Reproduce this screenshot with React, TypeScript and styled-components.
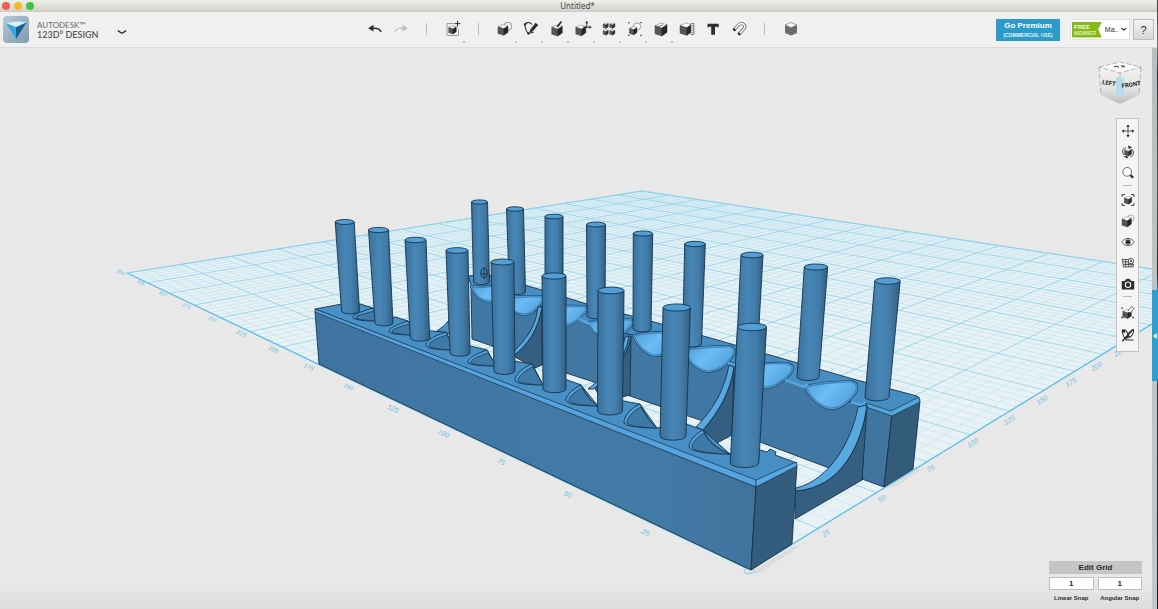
import React from "react";
import styled, { createGlobalStyle } from "styled-components";

const GlobalStyle = createGlobalStyle`
  * { box-sizing: border-box; }
  body { margin: 0; background: #e8e8e8; font-family: "Liberation Sans", Arial, sans-serif; color: #2b2b2b; }
  button, input { font-family: inherit; color: inherit; }
`;

const Desktop = styled.div`
  display: flex;
  min-height: 100vh;
`;
const AppWindow = styled.div`
  flex: 1;
  min-width: 0;
  display: flex;
  flex-direction: column;
`;
const DesktopEdge = styled.div`
  width: 1px;
  background: linear-gradient(#3c3d38, #74766f 8%, #2c2d29 12%, #55574d 30%, #23251f 45%, #2a9fd3 48%, #2a9fd3 62%, #30363c 63%, #15191f);
`;
const TitleBar = styled.header`
  height: 12px;
  display: grid;
  grid-template-columns: 1fr auto 1fr;
  align-items: center;
  padding: 0 2px;
  background: linear-gradient(#efefeb, #d3d2cc);
  border-bottom: 1px solid #cccbc5;
`;
const Lights = styled.div`
  display: flex;
  gap: 4px;
`;
const Light = styled.button<{ $color: string }>`
  width: 8px;
  height: 8px;
  padding: 0;
  border: 0;
  border-radius: 50%;
  background: ${(p) => p.$color};
`;
const WindowTitle = styled.h1`
  margin: 0;
  padding-right: 2px;
  font: 400 8px/10px "Noto Sans", sans-serif;
  color: #4a4a48;
`;
const ToolBar = styled.div`
  height: 36px;
  display: grid;
  grid-template-columns: 1fr auto 1fr;
  align-items: center;
  background: #f0f0f0;
  border-bottom: 1px solid #dcdcdc;
`;
const Brand = styled.div`
  display: flex;
  align-items: center;
  padding-left: 3px;
  gap: 8px;
`;
const BrandText = styled.div`
  display: flex;
  flex-direction: column;
  width: 60px;
  color: #6a6a6a;
  font: 400 8px/10px Lato, sans-serif;
  white-space: nowrap;
`;
const ProductName = styled.strong`
  font-size: 9px;
  font-weight: 600;
  color: #585858;
`;
const PlainButton = styled.button`
  display: flex;
  align-items: center;
  justify-content: center;
  padding: 0;
  border: 0;
  background: none;
`;
const BrandMenu = styled(PlainButton)`
  width: 20px;
  height: 16px;
  margin: 4px 0 0 7px;
`;
const Tools = styled.div`
  display: flex;
  align-self: start;
  margin-left: 9px;
`;
const Tool = styled(PlainButton)<{ $menu?: boolean }>`
  position: relative;
  width: 26px;
  height: 34px;
  &::after {
    content: "";
    display: ${(p) => (p.$menu ? "block" : "none")};
    position: absolute;
    right: 1px;
    bottom: 3px;
    width: 2px;
    height: 2px;
    background: #c8c8c8;
  }
`;
const ToolDivider = styled.span`
  width: 1px;
  height: 12px;
  margin: 11px 13px 11px 12px;
  background: #bdbdbd;
`;
const Account = styled.div`
  display: flex;
  justify-content: flex-end;
  align-items: center;
  padding-right: 3px;
`;
const Premium = styled.button`
  width: 64px;
  height: 22px;
  padding: 0;
  margin-right: 10px;
  border: 0;
  background: #2a9bcb;
  color: #fff;
  font-weight: 700;
  font-size: 8px;
  line-height: 10px;
  small { display: block; font-size: 5px; line-height: 8px; color: #e2f3fa; }
`;
const Member = styled.button`
  width: 60px;
  height: 21px;
  display: flex;
  align-items: center;
  gap: 3px;
  padding: 0 2px 0 1px;
  margin-right: 3px;
  border: 1px solid #e2e2e2;
  background: #fff;
  font-size: 7px;
  white-space: nowrap;
`;
const MemberTag = styled.span`
  width: 32px;
  height: 16px;
  padding: 2px 0 0 2px;
  text-align: left;
  background: #84b916;
  clip-path: polygon(0 0, 100% 0, 88% 50%, 100% 100%, 0 100%);
  color: #f4fbe4;
  font-weight: 700;
  font-size: 6px;
  line-height: 6px;
  small { display: block; font-size: 5px; line-height: 7px; color: #dcf0ab; }
`;
const Help = styled.button`
  width: 21px;
  height: 21px;
  padding: 0;
  border: 1px solid #b9bcc0;
  background: linear-gradient(#f1f2f3, #d6d8da);
  font-size: 11px;
  line-height: 18px;
`;
const Workspace = styled.main`
  flex: 1;
  display: flex;
`;
const Scene = styled.section`
  position: relative;
  flex: 1;
  min-width: 0;
  overflow: hidden;
`;
const SceneDrawing = styled.svg`
  position: absolute;
  inset: 0;
  width: 100%;
  height: 100%;
`;
const SideRail = styled.aside`
  width: 5px;
  display: flex;
  flex-direction: column;
  background: linear-gradient(#b6bfc4, #c3c8ca);
`;
const RailSpacer = styled.div<{ $grow: number }>`
  flex: ${(p) => p.$grow} 0 0;
`;
const RailHandle = styled(PlainButton)`
  height: 91px;
  background: #2a9fd3;
`;
const ViewCube = styled.svg`
  position: absolute;
  top: 12px;
  right: 10px;
  width: 44px;
  height: 46px;
`;
const NavBar = styled.nav`
  position: absolute;
  top: 70px;
  right: 13px;
  width: 23px;
  padding: 1px 0 5px;
  border: 1px solid #c4c4c4;
  background: #f5f5f5;
`;
const NavDivider = styled.hr`
  margin: 2px 6px 3px;
  border: 0;
  border-top: 1px solid #b9b9b9;
`;
const NavButton = styled(PlainButton)<{ $tall?: boolean }>`
  width: 21px;
  height: ${(p) => (p.$tall ? 23 : 21)}px;
`;
const GridPanel = styled.form`
  position: absolute;
  right: 10px;
  bottom: 6px;
  width: 93px;
  display: grid;
  grid-template-columns: 1fr 1fr;
  column-gap: 4px;
  row-gap: 3px;
  text-align: center;
  font-weight: 700;
`;
const EditGrid = styled.button`
  grid-column: 1 / -1;
  height: 13px;
  padding: 0;
  border: 0;
  background: #c5c5c5;
  font-size: 8px;
  font-weight: 700;
  line-height: 13px;
`;
const Field = styled.label`
  display: flex;
  flex-direction: column;
  gap: 3px;
  font-size: 6px;
  line-height: 10px;
  white-space: nowrap;
`;
const SnapInput = styled.input`
  width: 100%;
  height: 13px;
  padding: 0;
  border: 1px solid #bdbdbd;
  background: #fff;
  text-align: center;
  font-size: 8px;
  font-weight: 700;
`;

/* ---------- icons ---------- */
const INK = "#2e2e2e";

function Cube({ x, y, s }: { x: number; y: number; s: number }) {
  const k = s / 2;
  return (
    <g strokeLinejoin="round" strokeWidth={0.5}>
      <path d={`M${x - k} ${y - k * 0.6}L${x} ${y - k * 1.05}L${x + k} ${y - k * 0.75}L${x + k * 0.15} ${y - k * 0.2}Z`} fill="#fdfdfd" stroke="#666" />
      <path d={`M${x - k} ${y - k * 0.6}L${x + k * 0.15} ${y - k * 0.2}V${y + k * 1.1}L${x - k} ${y + k * 0.75}Z`} fill="#555" stroke="#444" />
      <path d={`M${x + k} ${y - k * 0.75}L${x + k * 0.15} ${y - k * 0.2}V${y + k * 1.1}L${x + k} ${y + k * 0.5}Z`} fill="#262626" stroke="#222" />
    </g>
  );
}

function Icon({ name, size = 18 }: { name: string; size?: number }) {
  const line = { fill: "none", stroke: INK, strokeWidth: 1 } as const;
  const art: Record<string, React.ReactNode> = {
    undo: <><path d="M6 8.500C10 7.800 13.500 8.400 15.200 12" {...line} strokeWidth={1.400} /><path d="M2.200 8.300L7.500 4.800V11.500Z" fill={INK} /></>,
    redo: <><path d="M12 8.500C8 7.800 4.500 8.400 2.800 12" fill="none" stroke="#bdbdbd" strokeWidth={1.200} /><path d="M15.800 8.300L10.500 4.800V11.500Z" fill="#bdbdbd" /></>,
    transform: <><path d="M10 3.500H3V15.500H14.500V9" {...line} strokeWidth={0.8} stroke="#888" /><Cube x={8.500} y={9.800} s={7.500} /><path d="M13.500 0.800V6.500M10.700 3.600H16.300" {...line} /></>,
    primitives: <><circle cx={11.800} cy={6.300} r={4} fill="#f7f7f7" stroke="#777" strokeWidth={0.8} /><Cube x={7} y={9.800} s={10} /></>,
    sketch: <><path d="M10 4.500C8 1.500 2.500 2 3 6C3.500 9 4 11.500 6.500 13.500C8 12.500 10 13 11.500 12" {...line} strokeWidth={1.100} /><path d="M8 10L13.500 2.800L16.300 5L10.500 11.500L7.500 12.500Z" fill={INK} /><circle cx={3} cy={4.500} r={1.200} fill={INK} /><circle cx={6.500} cy={13.500} r={1.200} fill={INK} /></>,
    construct: <><Cube x={9} y={10.300} s={10.500} /><path d="M9 7L13.500 1.500" {...line} strokeWidth={1.700} /></>,
    modify: <><Cube x={6.800} y={10.300} s={10} /><path d="M9 7.200H16M12.800 8V2.500" {...line} strokeWidth={0.900} /><path d="M12.800 0.800L14.400 3.200H11.200ZM17.800 7.200L15.400 5.600V8.800Z" fill={INK} /></>,
    pattern: <><Cube x={5.700} y={5.500} s={5} /><Cube x={12.300} y={5.500} s={5} /><Cube x={5.700} y={12.300} s={5} /><Cube x={12.300} y={12.300} s={5} /></>,
    group: <><circle cx={11} cy={6.500} r={3.600} fill="#fff" stroke="#777" strokeWidth={0.700} /><Cube x={7.200} y={10.600} s={7.500} /><path d="M2.500 3.500V2.500H3.800M14.200 2.500H15.500V3.500M2.500 14.500V15.500H3.800M14.200 15.500H15.500V14.500" {...line} strokeWidth={0.800} /></>,
    combine: <><Cube x={9} y={9.300} s={12} /><path d="M6 6.500L11.500 4.800" {...line} strokeWidth={0.600} /></>,
    measure: <><Cube x={7.800} y={9} s={11.500} /><path d="M13 3.500H15.800V14.500H13ZM14.200 5.500H15.800M14.200 7.700H15.800M14.200 10H15.800M14.200 12.200H15.800" fill="#f4f4f4" stroke="#555" strokeWidth={0.700} /></>,
    text: <path d="M3.500 3.700H14.700V7.200H13.500L13 6.700H11V14.800H7.200V6.700H5.200L4.700 7.200H3.500Z" fill={INK} />,
    magnet: <><path d="M4.200 9.800L9 4.500C12 1.800 16.500 5.500 14 8.800L9 14" fill="none" stroke="#444" strokeWidth={3} /><path d="M4.800 9.200L9 4.500C12 1.800 16.500 5.500 14 8.800L9.600 13.400" fill="none" stroke="#f4f4f4" strokeWidth={1.800} /><path d="M5 9L3.600 10.500M9.800 13.200L8.400 14.600" {...line} strokeWidth={3} /></>,
    material: <><path d="M3 5V12L9 15L15 12V5L9 7.500Z" fill="#8c8c8c" /><path d="M3 5L9 2.500L15 5L9 7.500Z" fill="#f6f6f6" stroke="#666" strokeWidth={0.600} />{[6.500, 8.500, 10.500, 12.500].map((y) => <path key={y} d={`M3 ${y}L9 ${y + 2.500}L15 ${y}`} fill="none" stroke="#444" strokeWidth={0.900} />)}</>,
    pan: <><path d="M9 2V16M2 9H16" {...line} /><path d="M9 0.800L11.200 4H6.800ZM9 17.200L11.200 14H6.800ZM0.800 9L4 6.800V11.200ZM17.200 9L14 6.800V11.200Z" fill={INK} /></>,
    orbit: <><path d="M3.500 12.500C0.500 8 3 4 6 3.500M14.500 5.500C17.500 10 15 14.500 12 15" {...line} strokeWidth={1.200} /><path d="M9 0.800L14.500 3L10 5ZM9 17.500L3.500 15L8 13.500Z" fill={INK} /><Cube x={9} y={9.300} s={9} /></>,
    zoom: <><circle cx={8} cy={7.500} r={5.600} fill="#fff" stroke={INK} strokeWidth={0.900} /><path d="M12.200 11.700L15.500 15.200" {...line} strokeWidth={3} /></>,
    fit: <><path d="M1.500 5V2H5M13 2H16.500V5M1.500 13V16H5M13 16H16.500V13" {...line} strokeWidth={1.200} /><Cube x={9} y={9.200} s={9.500} /></>,
    shade: <><circle cx={12.500} cy={5.500} r={4.300} fill="#f4f4f4" stroke="#888" strokeWidth={0.800} /><Cube x={7.300} y={10} s={12} /></>,
    eye: <><path d="M1 9C5 2.800 13 2.800 17 9C13 15.200 5 15.200 1 9Z" fill="#fff" stroke={INK} strokeWidth={1} /><circle cx={9} cy={9} r={3.600} fill="#555" /><circle cx={9} cy={9} r={1.500} fill="#111" /></>,
    grid: <><path d="M1 4.500H10M2 4.500L3 14H15.500L16.500 10M2.500 7.500H9.500M3 10.800H16M6 4.500V14M9.500 8V14M13 11V14" {...line} strokeWidth={1} /><circle cx={12.800} cy={6.500} r={3.500} fill="#eee" stroke={INK} strokeWidth={1} /><circle cx={12.800} cy={6.500} r={1.200} fill={INK} /></>,
    camera: <><path d="M1 5H5L6.500 2.500H11.500L13 5H17V16H1Z" fill={INK} /><circle cx={9} cy={10} r={3.500} fill={INK} stroke="#fff" strokeWidth={1.300} /></>,
    snap: <><Cube x={7.800} y={11.300} s={11} /><path d="M8.500 8L12.500 3C14 1 17.500 3.500 16 5.500L12.500 10" fill="#eee" stroke="#555" strokeWidth={1} /><path d="M0.500 4H2.500M0.500 16H2.500M14.500 16H16.500" {...line} strokeWidth={1.800} /></>,
    sketchOff: <><path d="M2 3C6 1.500 8 5 8.500 8C10 5 14 3 16 2C17 6 14 11 9.500 13M2 3C1 8 4 12 6.500 15.500H16" {...line} strokeWidth={1.300} /><path d="M1.500 17L15.500 2" {...line} strokeWidth={1.800} /><path d="M9 8.500L11.500 10.500L7 14.500L6 12Z" fill={INK} /><rect x={1} y={2} width={4.500} height={4} fill={INK} /></>,
  };
  return <svg width={size} height={size} viewBox="0 0 18 18" aria-hidden="true">{art[name]}</svg>;
}

function Chevron() {
  return <svg width="10" height="6" viewBox="0 0 10 6" aria-hidden="true"><path d="M1 1.500L3.500 3.500Q5 4.500 6.500 3.500L9 1.500" fill="none" stroke="#222" strokeWidth="1.500" /></svg>;
}

/* ---------- ground grid in perspective ---------- */
const NEAR = [750, 570];
const LEFT = [127, 273];
const RIGHT = [1224, 280];
const G = 1.255;
const H = 1.181;
const DIVISIONS = 14;

function project(u: number, v: number): [number, number] {
  const w = 1 + G * u + H * v;
  const at = (i: number) =>
    (NEAR[i] + (LEFT[i] * (1 + G) - NEAR[i]) * u + (RIGHT[i] * (1 + H) - NEAR[i]) * v) / w;
  return [at(0), at(1)];
}
function segment(a: [number, number], b: [number, number]) {
  return `M${a[0].toFixed(1)} ${a[1].toFixed(1)}L${b[0].toFixed(1)} ${b[1].toFixed(1)}`;
}
function gridPath(major: boolean) {
  const parts: string[] = [];
  for (let i = 0; i <= DIVISIONS * 5; i++) {
    if ((i % 5 === 0) !== major) continue;
    const t = i / (DIVISIONS * 5);
    parts.push(segment(project(t, 0), project(t, 1)), segment(project(0, t), project(1, t)));
  }
  return parts.join("");
}

function Ground() {
  const corners = [project(0, 0), project(1, 0), project(1, 1), project(0, 1)];
  const labels = Array.from({ length: DIVISIONS }, (_, i) => i + 1);
  return (
    <g>
      <polygon points={corners.map((c) => c.join(",")).join(" ")} fill="#e8f2f5" />
      <path d={gridPath(false)} stroke="#b9e0ee" strokeWidth="0.5" fill="none" />
      <path d={gridPath(true)} stroke="#8dd0ea" strokeWidth="0.800" fill="none" />
      <path d={segment(corners[1], corners[0]) + segment(corners[0], corners[3])} stroke="#62bfe6" strokeWidth="1.300" />
      <path d={segment(corners[1], corners[2]) + segment(corners[2], corners[3])} stroke="#8dd0ea" strokeWidth="1" />
      <g fill="#6cc0e2" fontFamily="Liberation Sans, sans-serif" textAnchor="middle">
        {labels.map((n) => {
          const [x, y] = project(n / DIVISIONS, 0);
          const size = n < 6 ? 7 : n < 10 ? 6 : 5;
          return <text key={n} fontSize={size} fontStyle="italic" transform={`translate(${x - 14 + n * 0.5} ${y + 9 - n * 0.6}) rotate(24)`}>{n * 25}</text>;
        })}
        {labels.slice(0, 9).map((n) => {
          const [x, y] = project(0, n / DIVISIONS);
          return <text key={n} fontSize={7} fontStyle="italic" transform={`translate(${x + 11 - n * 2} ${y + 6 + n}) rotate(-31)`}>{n * 25}</text>;
        })}
      </g>
    </g>
  );
}

/* ---------- the rack model ---------- */
type Peg = [tx: number, ty: number, tr: number, bx: number, by: number, br: number];
const rearPegs: Peg[] = [
  [479.5, 202, 8, 481.5, 282, 8],
  [515, 209, 8.5, 517.5, 292, 8],
  [554, 216.5, 9, 554, 300, 9],
  [596, 224.5, 9.5, 596, 316, 9],
  [643, 233.5, 9.7, 642, 329, 9],
  [695, 244, 10.3, 692, 344, 9.5],
  [752, 255, 11, 746.5, 360, 10.5],
  [816, 267, 11.7, 808, 377, 11],
  [887.5, 281, 12.7, 877, 397, 12],
];
const frontPegs: Peg[] = [
  [344.7, 222, 9.5, 350.5, 311, 9],
  [378.5, 230, 10, 384, 323, 9],
  [415.5, 240, 10.5, 420, 338, 9.7],
  [457, 250.5, 11, 460, 353, 10],
  [502.5, 262, 11.5, 504.5, 371, 10.5],
  [554, 276, 12, 554.5, 389, 11.5],
  [611, 290.5, 13, 610, 411, 12.5],
  [676.7, 307.5, 13.7, 673, 436, 13],
  [752, 327, 14.5, 744.5, 463, 14.3],
];
/* each scoop: upper tip, left belly, lower right end */
const scoops = [
  [373, 308, 353, 318, 377, 321],
  [408, 321, 389, 332, 412, 335],
  [446, 332, 426, 346, 451, 350],
  [487, 350, 468, 363, 495, 366],
  [532, 364, 515, 381, 543, 385],
  [581, 385, 566, 401, 598, 406],
  [640, 404, 624, 423, 657, 428],
  [703, 430, 689, 447, 730, 454],
];
const cups = [
  "M472 287Q484 289 494 286L514 288Q505 301 489 301Q477 299 472 287Z",
  "M505 299Q515 297 541 297Q545 300 539 304Q532 314 523 314Q512 312 505 299Z",
  "M548 309Q557 306 584 307Q589 308 582 314Q571 327 558 325Q552 320 548 309Z",
  "M589 323Q604 320 629 320Q635 321 628 328Q619 338 606 337Q594 334 589 323Z",
  "M634 336Q650 332 681 333Q687 335 677 345Q667 355 653 355Q641 350 634 336Z",
  "M685 351Q702 347 729 347Q737 349 731 357Q722 370 708 371Q693 368 685 351Z",
  "M744 367Q762 363 787 364Q795 366 790 373Q776 387 765 387Q751 383 744 367Z",
  "M806 387Q822 383 851 382Q859 384 855 392Q843 409 830 408Q815 404 806 387Z",
];

function PegShape({ peg }: { peg: Peg }) {
  const [tx, ty, tr, bx, by, br] = peg;
  return (
    <g stroke="#17334a" strokeWidth="0.900">
      <path d={`M${tx - tr} ${ty}L${bx - br} ${by}A${br} ${br * 0.32} 0 0 0 ${bx + br} ${by}L${tx + tr} ${ty}Z`} fill="url(#peg)" />
      <ellipse cx={tx} cy={ty} rx={tr} ry={tr * 0.26} fill="#519fd6" />
    </g>
  );
}

function Model() {
  return (
    <g stroke="#17334a" strokeWidth="0.900" strokeLinejoin="round">
      {/* rear wall */}
      <path d="M468 276L486 274L542 290L587 304L632 316L665 325L707 337L770 355L853 379L917 396L920 400L891 413L862 405L472 288Z" fill="#468dc2" />
      <path d="M471 287L515 301L545 307L590 324L632 335L690 352L735 363L805 388L862 405L884 413L862 480L829 468L760 442L700 420L662 407L630 396L597 383L566 373L495 347L472 339Z" fill="#4178a3" />
      {cups.map((d) => (
        <g key={d}>
          <path d={d} fill="#4b98d1" stroke="#1b3d58" strokeWidth="4" />
          <path d={d} fill="#4f9dd7" stroke="#4f9dd7" strokeWidth="2.800" />
          <path d={d} fill="url(#cup)" stroke="#2a5a80" strokeWidth="0.500" />
        </g>
      ))}
      <path d="M548 308L566 314M785 380L804 387L808 384M851 402L862 405L866 402M579 319L590 324M728 363L737 365" fill="none" stroke="#55a6e0" strokeWidth="2.500" />
      {/* end block of the rear wall */}
      <path d="M866 405L892 414L884 487L862 479Z" fill="#41759f" />
      <path d="M892 414L920 401L913 469L884 487Z" fill="#335b7a" />
      <path d="M866 403L891 411L919 397L920 402L892 416L866 407Z" fill="#54a5de" strokeWidth="0.700" />
      {/* arched ribs joining both walls */}
      <path d="M867 406C862 442 843 488 795 491V519L862 480Z" fill="#355f80" />
      <path d="M858 407L867 405C862 442 843 488 795 491L796 488C830 480 852 440 858 407Z" fill="#58a8e2" />
      <path d="M734 367C730 392 720 410 703 430L717 443L732 435Z" fill="#355f80" />
      <path d="M729 365L734 367C730 392 720 410 703 430L696 427C715 407 724 390 729 365Z" fill="#58a8e2" />
      <path d="M631 336C628 355 617 372 595 388L602 402L630 395Z" fill="#355f80" />
      <path d="M625 337L629 336C625 360 610 378 593 389L588 389C612 370 622 355 625 337Z" fill="#58a8e2" />
      <path d="M542 307C538 330 528 345 513 356L535 368L542 365Z" fill="#355f80" />
      <path d="M538 307L542 307C538 330 528 345 513 356L513 352C528 338 536 325 538 307Z" fill="#58a8e2" />
      <path d="M450 319Q445 326 437 331L450 334Z" fill="#4b92c9" />
      {rearPegs.map((p) => <PegShape key={p[0]} peg={p} />)}
      <ellipse cx="484" cy="273" rx="3.200" ry="5" fill="none" stroke="#10293c" />
      <path d="M481 274H487M484 268V278" stroke="#10293c" strokeWidth="0.700" />
      {/* front wall */}
      <path d="M315 309L347 303L360 304L373 308L377 321L395 317L408 321L412 335L430 331L446 332L451 350L470 346L487 350L495 366L513 361L532 364L543 385L567 380L581 385L598 406L623 401L640 404L657 428L686 424L703 430L730 454L760 450L767 452L770 449L776 452L775 455L797 463L756 481Z" fill="#488fc5" />
      {scoops.map(([tx, ty, lx, ly, bx, by]) => (
        <g key={tx}>
          <path d={`M${tx} ${ty}C${lx + 4} ${ty + 5} ${lx - 1} ${ly - 3} ${lx} ${ly}Q${lx + 4} ${by} ${bx} ${by}Q${tx + 8} ${(ty + by) / 2 + 5} ${tx} ${ty}Z`} fill="#529ed6" />
          <path d={`M${tx + 1} ${ty + 3}C${lx + 8} ${ty + 7} ${lx + 2} ${ly - 3} ${lx + 3} ${ly}Q${lx + 5} ${by - 1} ${bx} ${by}Q${tx + 8} ${(ty + by) / 2 + 5} ${tx + 1} ${ty + 3}Z`} fill="#3f79a7" strokeWidth="0.700" />
        </g>
      ))}
      <path d="M315 311L756 487L751 570L319 364Z" fill="url(#frontFace)" />
      <path d="M756 487L797 465L792 544L751 570Z" fill="#345d7d" />
      <path d="M315 309L756 480L756 487L315 312Z" fill="#55a4df" strokeWidth="0.700" />
      <path d="M756 480L796 462L797 466L756 487Z" fill="#57a9e4" strokeWidth="0.700" />
      {frontPegs.map((p) => <PegShape key={p[0]} peg={p} />)}
    </g>
  );
}

function SceneArt() {
  return (
    <SceneDrawing viewBox="0 48 1152 561" preserveAspectRatio="xMidYMid slice" role="img" aria-label="Rack model on the work plane">
      <defs>
        <linearGradient id="peg">
          <stop offset="0" stopColor="#3a709b" />
          <stop offset="0.400" stopColor="#4786b6" />
          <stop offset="0.700" stopColor="#427dab" />
          <stop offset="1" stopColor="#325f82" />
        </linearGradient>
        <linearGradient id="cup" x1="0" y1="0" x2="1" y2="0.500">
          <stop offset="0" stopColor="#4f9fda" />
          <stop offset="0.500" stopColor="#6cbcf5" />
          <stop offset="1" stopColor="#54a3dd" />
        </linearGradient>
        <linearGradient id="frontFace" x1="0" y1="0" x2="1" y2="0">
          <stop offset="0" stopColor="#4074a0" />
          <stop offset="0.750" stopColor="#437ba7" />
          <stop offset="1" stopColor="#3f739c" />
        </linearGradient>
        <linearGradient id="backdrop" x1="0" y1="0" x2="0" y2="1">
          <stop offset="0" stopColor="#e9e9e9" />
          <stop offset="0.950" stopColor="#e8e8e8" />
          <stop offset="1" stopColor="#dddddd" />
        </linearGradient>
      </defs>
      <rect y="48" width="1152" height="561" fill="url(#backdrop)" />
      <path d="M751 572L792 547L800 546L758 574Z M886 488L913 471L925 467L897 486Z" fill="#dadcdd" />
      <Ground />
      <ellipse cx="749" cy="571" rx="5" ry="2.500" fill="#d4e6ee" stroke="#9fc5d8" />
      <Model />
    </SceneDrawing>
  );
}

const toolItems: [string, string, boolean][] = [
  ["primitives", "Primitives", true],
  ["sketch", "Sketch", true],
  ["construct", "Construct", true],
  ["modify", "Modify", true],
  ["pattern", "Pattern", true],
  ["group", "Grouping", true],
  ["combine", "Combine", true],
  ["measure", "Measure", false],
  ["text", "Text", false],
  ["magnet", "Snap", false],
];
const navGroups: { tall?: boolean; names: [string, string][] }[] = [
  { names: [["pan", "Pan"], ["orbit", "Orbit"], ["zoom", "Zoom"]] },
  { names: [["fit", "Fit"], ["shade", "Shading"], ["eye", "Visibility"], ["grid", "Grid"], ["camera", "Screenshot"]] },
  { tall: true, names: [["snap", "Snap settings"], ["sketchOff", "Hide sketches"]] },
];

export default function App() {
  return (
    <Desktop>
      <GlobalStyle />
      <AppWindow>
        <TitleBar>
          <Lights>
            <Light $color="#ee5c54" aria-label="Close" />
            <Light $color="#f5b92f" aria-label="Minimize" />
            <Light $color="#3fc63c" aria-label="Full screen" />
          </Lights>
          <WindowTitle>Untitled*</WindowTitle>
        </TitleBar>
        <ToolBar>
          <Brand>
            <svg width="26" height="27" viewBox="0 0 26 27" aria-hidden="true">
              <defs>
                <linearGradient id="logo" x1="0" y1="0" x2="1" y2="1">
                  <stop offset="0" stopColor="#b7c9d5" />
                  <stop offset="1" stopColor="#7d9bad" />
                </linearGradient>
              </defs>
              <rect width="26" height="27" rx="4" fill="url(#logo)" />
              <path d="M3 7L13 11V23Z" fill="#36a9e1" />
              <path d="M24 6L13 11V23Z" fill="#17628f" />
              <path d="M3 7L14 5.500L24 6L13 11Z" fill="#d9f0fb" />
            </svg>
            <BrandText>
              <span>AUTODESK™</span>
              <ProductName>123D° DESIGN</ProductName>
            </BrandText>
            <BrandMenu aria-label="Main menu"><Chevron /></BrandMenu>
          </Brand>
          <Tools>
            <Tool aria-label="Undo"><Icon name="undo" /></Tool>
            <Tool aria-label="Redo"><Icon name="redo" /></Tool>
            <ToolDivider />
            <Tool $menu aria-label="Transform"><Icon name="transform" /></Tool>
            <ToolDivider />
            {toolItems.map(([name, label, menu]) => (
              <Tool key={name} $menu={menu} aria-label={label}><Icon name={name} /></Tool>
            ))}
            <ToolDivider />
            <Tool aria-label="Material"><Icon name="material" /></Tool>
          </Tools>
          <Account>
            <Premium>Go Premium<small>(COMMERCIAL USE)</small></Premium>
            <Member>
              <MemberTag>FREE<small>MEMBER</small></MemberTag>
              Ma..
              <svg width="6" height="5" viewBox="0 0 6 5" aria-hidden="true"><path d="M0.500 1.200L3 3.200L5.500 1.200" fill="none" stroke="#222" strokeWidth="1.200" /></svg>
            </Member>
            <Help>?</Help>
          </Account>
        </ToolBar>
        <Workspace>
          <Scene>
            <SceneArt />
            <ViewCube viewBox="0 0 44 46" aria-label="View cube">
              <defs>
                <linearGradient id="cubeSide" x1="0" y1="0" x2="0" y2="1">
                  <stop offset="0" stopColor="#f2f2f2" />
                  <stop offset="0.600" stopColor="#e2e2e2" />
                  <stop offset="1" stopColor="#bdbdbd" />
                </linearGradient>
              </defs>
              <path d="M1 7L22 2L43 7L22 13Z" fill="#fafafa" />
              <path d="M1 7L22 13V44L3 35Z" fill="url(#cubeSide)" />
              <path d="M43 7L22 13V44L41 35Z" fill="url(#cubeSide)" />
              <path d="M1 7L22 2L43 7L22 13ZM1 7L3 35M43 7L41 35M22 13V18" fill="none" stroke="#a6a6a6" strokeWidth="0.800" strokeDasharray="5 2" />
              <path d="M18 17L22 18.500L26 17V35L22 37L18 35Z" fill="#b5dcec" />
              <path d="M16 7L19 6L21 7.500M23 5.500L27 7M24 7.500L26 5.500" stroke="#333" strokeWidth="1" fill="none" />
              <g fill="#222" fontFamily="Roboto, sans-serif" fontWeight="700" fontSize="6">
                <text transform="translate(4 24) rotate(9)">LEFT</text>
                <text transform="translate(24 28) rotate(-9)">FRONT</text>
              </g>
            </ViewCube>
            <NavBar aria-label="Navigation">
              {navGroups.map((g, i) => (
                <React.Fragment key={g.names[0][0]}>
                  {i > 0 && <NavDivider />}
                  {g.names.map(([name, label]) => (
                    <NavButton key={name} $tall={g.tall} aria-label={label}><Icon name={name} size={14} /></NavButton>
                  ))}
                </React.Fragment>
              ))}
            </NavBar>
            <GridPanel>
              <EditGrid type="button">Edit Grid</EditGrid>
              <Field><SnapInput defaultValue="1" />Linear Snap</Field>
              <Field><SnapInput defaultValue="1" />Angular Snap</Field>
            </GridPanel>
          </Scene>
          <SideRail>
            <RailSpacer $grow={242} />
            <RailHandle aria-label="Open panel">
              <svg width="5" height="6" viewBox="0 0 5 6" aria-hidden="true"><path d="M5 0V6L1 3Z" fill="#fff" /></svg>
            </RailHandle>
            <RailSpacer $grow={228} />
          </SideRail>
        </Workspace>
      </AppWindow>
      <DesktopEdge />
    </Desktop>
  );
}
